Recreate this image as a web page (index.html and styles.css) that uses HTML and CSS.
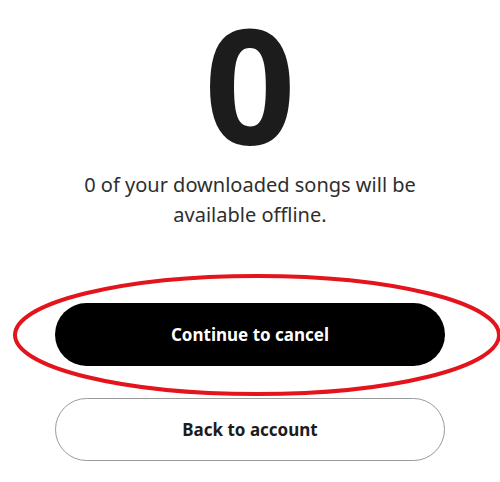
FILE: index.html
```html
<!DOCTYPE html>
<html lang="en">
<head>
<meta charset="utf-8">
<link rel="stylesheet" href="styles.css">
</head>
<body>
<main class="page">
  <div class="count">0</div>
  <p class="desc">0 of your downloaded songs will be<br>available offline.</p>
  <div class="actions">
    <div class="primary-wrap">
      <button class="btn btn-primary">Continue to cancel</button>
      <svg class="highlight" viewBox="0 0 490 124" width="490" height="124" aria-hidden="true">
        <ellipse cx="245" cy="62" rx="242" ry="59" fill="none" stroke="#e3141c" stroke-width="4"/>
      </svg>
    </div>
    <button class="btn btn-secondary">Back to account</button>
  </div>
</main>
</body>
</html>
```
FILE: styles.css
```css
* { box-sizing: border-box; }
html, body { margin: 0; padding: 0; background: #fff; }
body {
  width: 500px;
  height: 482px;
  overflow: hidden;
  font-family: "Noto Sans", "Liberation Sans", sans-serif;
}
.page {
  display: flex;
  flex-direction: column;
  align-items: center;
}
.count {
  font-size: 160px;
  font-weight: 700;
  line-height: 160px;
  color: #1c1c1c;
  margin-top: 2px;
}
.desc {
  margin: 8px 0 0;
  font-size: 20px;
  line-height: 30px;
  color: #2e2e2e;
  text-align: center;
}
.actions {
  width: 390px;
  display: flex;
  flex-direction: column;
  gap: 32px;
  margin-top: 73px;
}
.primary-wrap {
  position: relative;
}
.btn {
  display: block;
  width: 100%;
  height: 63px;
  border-radius: 32px;
  font-family: inherit;
  font-size: 17px;
  font-weight: 700;
  cursor: pointer;
}
.btn-primary {
  background: #000;
  color: #fff;
  border: none;
}
.btn-secondary {
  background: #fff;
  color: #1c1c1c;
  border: 1px solid #9a9a9a;
}
.highlight {
  position: absolute;
  left: -43px;
  top: -30px;
  pointer-events: none;
}
```
